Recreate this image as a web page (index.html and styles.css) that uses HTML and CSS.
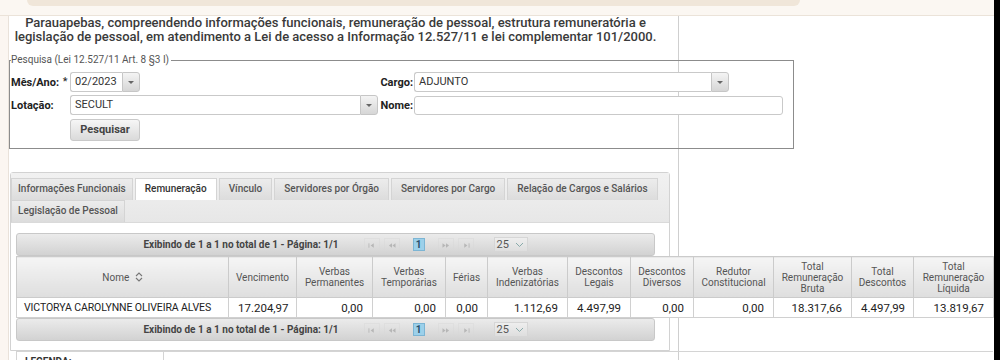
FILE: index.html
```html
<!DOCTYPE html>
<html lang="pt-BR">
<head>
    <meta charset="UTF-8">
    <meta name="viewport" content="width=device-width, initial-scale=1.0">
    <title>Portal da Transparência - Pessoal</title>
    <link rel="stylesheet" href="styles.css">
</head>
<body>
    <div class="topbar"><div class="pill"></div></div>

    <div class="page">
        <div class="strip"></div>

        <div class="main">
            <div class="column">
                <p class="intro">Parauapebas, compreendendo informações funcionais, remuneração de pessoal, estrutura remuneratória e legislação de pessoal, em atendimento a Lei de acesso a Informação 12.527/11 e lei complementar 101/2000.</p>

                <fieldset class="search">
                    <legend>Pesquisa (Lei 12.527/11 Art. 8 §3 I)</legend>
                    <div class="form-grid">
                        <label class="lbl">Mês/Ano: <span class="req">*</span></label>
                        <div class="combo combo-month">
                            <span class="combo-value">02/2023</span>
                            <span class="combo-btn"><span class="caret"></span></span>
                        </div>
                        <label class="lbl lbl-right">Cargo:</label>
                        <div class="combo combo-cargo">
                            <span class="combo-value">ADJUNTO</span>
                            <span class="combo-btn"><span class="caret"></span></span>
                        </div>

                        <label class="lbl">Lotação:</label>
                        <div class="combo combo-lotacao">
                            <span class="combo-value">SECULT</span>
                            <span class="combo-btn"><span class="caret"></span></span>
                        </div>
                        <label class="lbl lbl-right">Nome:</label>
                        <div class="text-input"></div>

                        <span></span>
                        <div class="actions"><button class="btn">Pesquisar</button></div>
                    </div>
                </fieldset>

                <div class="tabs">
                    <ul class="tab-nav">
                        <li class="first">Informações Funcionais</li>
                        <li class="active">Remuneração</li>
                        <li>Vínculo</li>
                        <li>Servidores por Órgão</li>
                        <li>Servidores por Cargo</li>
                        <li>Relação de Cargos e Salários</li>
                        <li class="first">Legislação de Pessoal</li>
                    </ul>

                    <div class="tab-body">
                        <div class="datatable">
                            <div class="paginator">
                                <span class="pg-text">Exibindo de 1 a 1 no total de 1 - Página: 1/1</span>
                                <span class="pg-btn"><svg width="16" height="13" viewBox="0 0 16 13"><rect x="4" y="4" width="1" height="5" fill="#888"/><path d="M10 4v5L6.5 6.5z" fill="#888"/></svg></span>
                                <span class="pg-btn"><svg width="16" height="13" viewBox="0 0 16 13"><path d="M8 4v5L4.5 6.5zM12 4v5L8.5 6.5z" fill="#888"/></svg></span>
                                <span class="pg-page">1</span>
                                <span class="pg-btn"><svg width="16" height="13" viewBox="0 0 16 13"><path d="M4 4v5l3.5-2.5zM8 4v5l3.5-2.5z" fill="#888"/></svg></span>
                                <span class="pg-btn"><svg width="16" height="13" viewBox="0 0 16 13"><path d="M6 4v5l3.5-2.5z" fill="#888"/><rect x="11" y="4" width="1" height="5" fill="#888"/></svg></span>
                                <span class="pg-select">25 <svg width="9" height="6" viewBox="0 0 9 6"><path d="M1 1l3.5 3.5L8 1" fill="none" stroke="#8aa" stroke-width="1"/></svg></span>
                            </div>

                            <table class="grid">
                                <thead>
                                    <tr>
                                        <th class="c-nome">Nome <svg class="sort" width="8" height="10" viewBox="0 0 8 10"><path d="M1 4l3-3 3 3M1 6l3 3 3-3" fill="none" stroke="#777" stroke-width="1.1"/></svg></th>
                                        <th class="c-venc">Vencimento</th>
                                        <th class="c-perm">Verbas<br>Permanentes</th>
                                        <th class="c-temp">Verbas<br>Temporárias</th>
                                        <th class="c-ferias">Férias</th>
                                        <th class="c-inden">Verbas<br>Indenizatórias</th>
                                        <th class="c-legais">Descontos<br>Legais</th>
                                        <th class="c-div">Descontos<br>Diversos</th>
                                        <th class="c-red">Redutor<br>Constitucional</th>
                                        <th class="c-bruta">Total<br>Remuneração<br>Bruta</th>
                                        <th class="c-desc">Total<br>Descontos</th>
                                        <th class="c-liq">Total<br>Remuneração<br>Líquida</th>
                                    </tr>
                                </thead>
                                <tbody>
                                    <tr>
                                        <td class="name">VICTORYA CAROLYNNE OLIVEIRA ALVES</td>
                                        <td>17.204,97</td>
                                        <td>0,00</td>
                                        <td>0,00</td>
                                        <td>0,00</td>
                                        <td>1.112,69</td>
                                        <td>4.497,99</td>
                                        <td>0,00</td>
                                        <td>0,00</td>
                                        <td>18.317,66</td>
                                        <td>4.497,99</td>
                                        <td>13.819,67</td>
                                    </tr>
                                </tbody>
                            </table>

                            <div class="paginator">
                                <span class="pg-text">Exibindo de 1 a 1 no total de 1 - Página: 1/1</span>
                                <span class="pg-btn"><svg width="16" height="13" viewBox="0 0 16 13"><rect x="4" y="4" width="1" height="5" fill="#888"/><path d="M10 4v5L6.5 6.5z" fill="#888"/></svg></span>
                                <span class="pg-btn"><svg width="16" height="13" viewBox="0 0 16 13"><path d="M8 4v5L4.5 6.5zM12 4v5L8.5 6.5z" fill="#888"/></svg></span>
                                <span class="pg-page">1</span>
                                <span class="pg-btn"><svg width="16" height="13" viewBox="0 0 16 13"><path d="M4 4v5l3.5-2.5zM8 4v5l3.5-2.5z" fill="#888"/></svg></span>
                                <span class="pg-btn"><svg width="16" height="13" viewBox="0 0 16 13"><path d="M6 4v5l3.5-2.5z" fill="#888"/><rect x="11" y="4" width="1" height="5" fill="#888"/></svg></span>
                                <span class="pg-select">25 <svg width="9" height="6" viewBox="0 0 9 6"><path d="M1 1l3.5 3.5L8 1" fill="none" stroke="#8aa" stroke-width="1"/></svg></span>
                            </div>
                        </div>
                    </div>
                </div>

                <table class="legend">
                    <tr>
                        <td class="legend-title">LEGENDA:</td>
                        <td class="legend-body"></td>
                    </tr>
                </table>
            </div>
        </div>

        <div class="edge"></div>
    </div>
</body>
</html>
```

FILE: styles.css
```css
* {
    margin: 0;
    padding: 0;
    box-sizing: border-box;
}

body {
    width: 1000px;
    height: 360px;
    overflow: hidden;
    background: #fff;
    color: #222;
    font-family: Roboto, "Noto Sans", sans-serif;
    position: relative;
}

/* browser chrome remnants at the top */
.topbar {
    height: 16px;
    background: #fbf7f2;
    border-bottom: 1px solid #ebe3d9;
    margin-right: 6px;
}

.pill {
    margin-left: 27px;
    width: 773px;
    height: 6px;
    background: #f0e6d9;
    border-radius: 0 0 9px 9px;
}

.page {
    display: flex;
    height: 344px;
}

.strip {
    width: 9px;
    background: #fbf6f1;
    border-right: 1px solid #e9e2da;
}

.edge {
    position: absolute;
    top: 0;
    right: 0;
    width: 6px;
    height: 360px;
    background: #000;
}

.main {
    flex: 1;
}

.column {
    width: 670px;
    height: 100%;
    border-right: 1px solid #cfcfcf;
}

.intro {
    margin-right: 16px;
    text-align: center;
    font-size: 13px;
    font-weight: 500;
    line-height: 14px;
    color: #3a3a3a;
}

/* search form */
.search {
    margin-top: 10px;
    width: 785px;
    border: 1px solid #8c8c8c;
    padding: 6px 0 8px 1px;
}

.search legend {
    font-size: 10px;
    line-height: 12px;
    color: #555;
    padding: 0 2px 0 0;
}

.form-grid {
    display: grid;
    grid-template-columns: 59px 309px 35px auto;
    grid-template-rows: 20px 20px 22px;
    row-gap: 3px;
    align-items: center;
}

.actions {
    grid-column: 2 / 4;
    height: 22px;
}

.lbl {
    font-size: 11px;
    font-weight: 700;
    color: #222;
}

.lbl-right {
    text-align: right;
    padding-right: 1px;
}

.req {
    font-weight: 400;
    margin-left: 1px;
    position: relative;
    top: -1px;
}

.combo {
    display: flex;
    height: 100%;
}

.combo-value {
    flex: 1;
    background: #fff;
    border: 1px solid #c9c9c9;
    border-right: none;
    border-radius: 3px 0 0 3px;
    font-size: 11px;
    line-height: 17px;
    padding-left: 4px;
    color: #333;
}

.combo-btn {
    width: 18px;
    border: 1px solid #c6c6c6;
    border-radius: 0 3px 3px 0;
    background: linear-gradient(#f4f4f4, #d6d6d6);
    display: flex;
    align-items: center;
    justify-content: center;
}

.caret {
    width: 0;
    height: 0;
    border-left: 3px solid transparent;
    border-right: 3px solid transparent;
    border-top: 3px solid #666;
}

.combo-month { width: 70px; }
.combo-lotacao { width: 308px; }
.combo-cargo { width: 315px; }

.text-input {
    width: 369px;
    height: 19px;
    background: #fff;
    border: 1px solid #c9c9c9;
    border-radius: 3px;
}

.btn {
    width: 70px;
    height: 22px;
    border: 1px solid #c9c9c9;
    border-radius: 3px;
    background: linear-gradient(#f6f6f6, #dadada);
    font-family: Roboto, sans-serif;
    font-size: 11px;
    font-weight: 700;
    color: #444;
}

/* tabs */
.tabs {
    margin: 23px 0 0 1px;
    width: 660px;
    border: 1px solid #d2d2d2;
    border-radius: 3px 3px 0 0;
}

.tab-nav {
    list-style: none;
    display: flex;
    flex-wrap: wrap;
    gap: 0 2px;
    padding-top: 5px;
    background: linear-gradient(#f1f1f1, #e7e7e7);
    border-bottom: 1px solid #dadada;
}

.tab-nav li {
    height: 22px;
    line-height: 20px;
    padding: 0 9px;
    font-size: 10px;
    font-weight: 500;
    color: #555;
    background: linear-gradient(#ececec, #dcdcdc);
    border: 1px solid #d4d4d4;
    border-bottom: none;
}

.tab-nav li.first {
    padding: 0 6px;
}

.tab-nav li.active {
    background: #fff;
    color: #333;
    padding: 0 9px;
}

.tab-body {
    padding: 10px 14px 9px 5px;
}

.datatable {
    width: 639px;
}

.paginator {
    height: 23px;
    display: flex;
    align-items: center;
    justify-content: center;
    background: linear-gradient(#ebebeb, #d2d2d2);
    border: 1px solid #c8c8c8;
    border-radius: 3px;
    font-size: 10px;
    color: #444;
}

.pg-text {
    font-weight: 700;
    margin-right: 23px;
}

.pg-btn {
    width: 16px;
    height: 13px;
    margin: 0 2px;
    border: 1px solid #d8d8d8;
    opacity: 0.45;
    display: flex;
}

.pg-page {
    width: 12px;
    height: 13px;
    margin: 0 11px;
    background: #9cd0ea;
    border: 1px solid #7cb5d4;
    text-align: center;
    font-weight: 700;
    line-height: 11px;
    color: #2a4f6a;
}

.pg-select {
    margin-left: 18px;
    width: 34px;
    height: 15px;
    line-height: 14px;
    padding-left: 2px;
    font-size: 11px;
    color: #555;
    background: linear-gradient(#eee, #dedede);
    border: 1px solid #d6d6d6;
}

.pg-select svg {
    margin-left: 3px;
}

.grid {
    width: 977px;
    border-collapse: collapse;
    table-layout: fixed;
}

.grid th {
    height: 41px;
    background: linear-gradient(#f5f5f5, #dedede);
    border: 1px solid #cbcbcb;
    font-size: 10px;
    font-weight: 400;
    line-height: 11px;
    color: #555;
}

.grid .sort {
    margin-left: 3px;
    vertical-align: -1px;
}

.grid td {
    height: 20px;
    border: 1px solid #d0d0d0;
    background: #fff;
    font-size: 11.5px;
    color: #222;
    text-align: right;
    padding: 0 9px;
    white-space: nowrap;
}

.grid td.name {
    text-align: left;
    padding-left: 7px;
    font-size: 10.5px;
    letter-spacing: -0.1px;
}

.c-nome { width: 212px; }
.c-venc { width: 68px; }
.c-perm { width: 76px; }
.c-temp { width: 73px; }
.c-ferias { width: 42px; }
.c-inden { width: 80px; }
.c-legais { width: 63px; }
.c-div { width: 63px; }
.c-red { width: 80px; }
.c-bruta { width: 78px; }
.c-desc { width: 62px; }
.c-liq { width: 80px; }

/* legend box */
.legend {
    margin-left: 7px;
    width: 977px;
    border-collapse: collapse;
}

.legend td {
    border-top: 1px solid #d4d4d4;
    height: 30px;
    vertical-align: top;
}

.legend-title {
    width: 147px;
    border-left: 1px solid #d4d4d4;
    border-right: 1px solid #d4d4d4;
    padding: 4px 0 0 8px;
    font-size: 10px;
    font-weight: 700;
    color: #333;
}
```
